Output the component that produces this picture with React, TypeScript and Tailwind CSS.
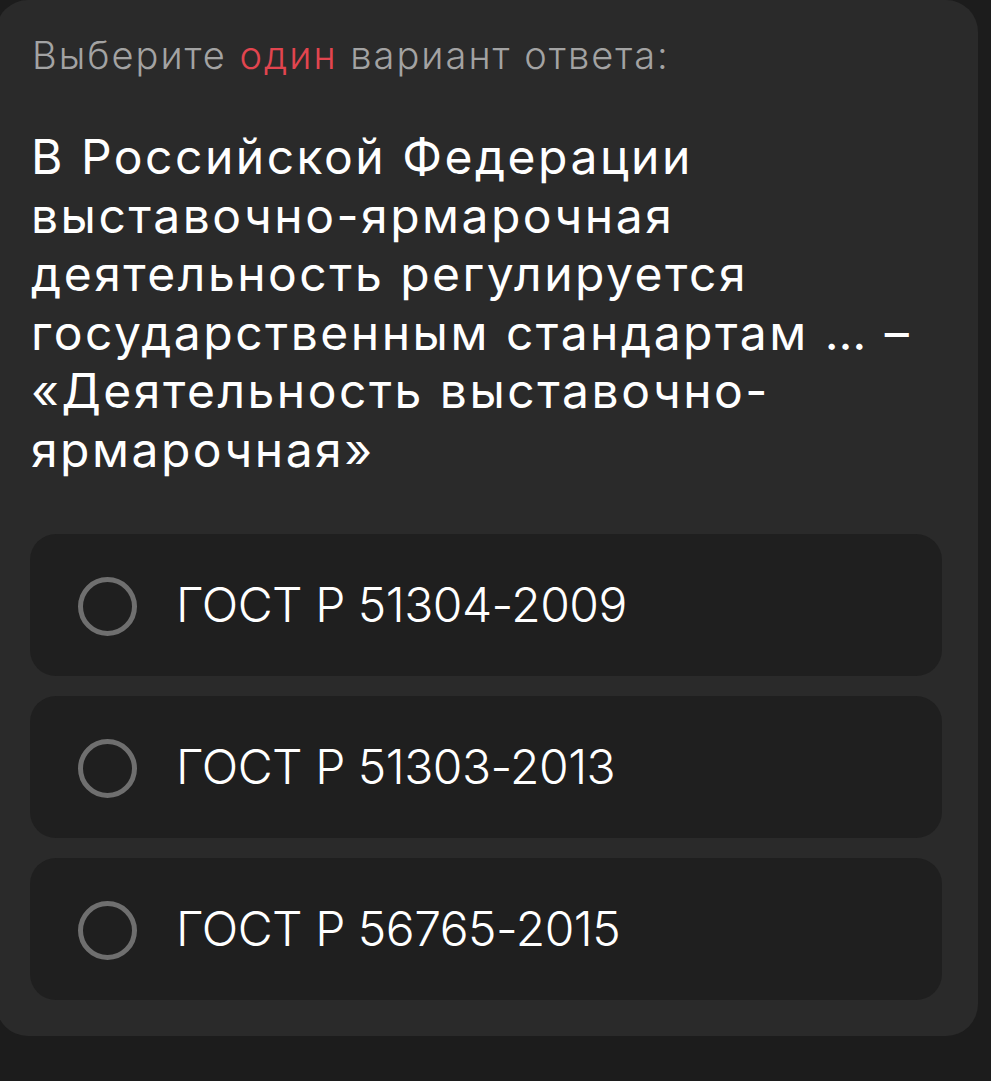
export default function App() {
  const options = ["ГОСТ Р 51304-2009", "ГОСТ Р 51303-2013", "ГОСТ Р 56765-2015"];
  const lines = [
    "В Российской Федерации",
    "выставочно-ярмарочная",
    "деятельность регулируется",
    "государственным стандартам … –",
    "«Деятельность выставочно-",
    "ярмарочная»",
  ];
  return (
    <div className="min-h-[1081px] w-[991px] bg-[#1c1c1c] overflow-hidden" style={{ fontFamily: "Inter, 'Noto Sans', sans-serif" }}>
      <div className="-ml-[4px] w-[982px] rounded-[32px] bg-[#2a2a2a] pl-[34px] pr-[36px] pt-[27px] pb-[36px]">
        <div className="pl-[2px] text-[38px] font-light text-[#a3a3a3] leading-[56px] tracking-[2px]">
          Выберите <span className="text-[#e2454f]">один</span> вариант ответа:
        </div>
        <div className="mt-[45px] pl-[1px] text-[48px] leading-[58.5px] text-white tracking-[2.5px]">
          {lines.map((l) => (
            <div key={l}>{l}</div>
          ))}
        </div>
        <div className="mt-[55px] flex flex-col gap-[20px]">
          {options.map((o) => (
            <div key={o} className="flex h-[142px] items-center rounded-[26px] bg-[#1f1f1f] pl-[48px]">
              <div className="mt-[2px] h-[59px] w-[59px] rounded-full border-[5px] border-[#6f6f6f]" />
              <div className="ml-[39px] text-[48px] font-light text-white tracking-[-0.5px]">{o}</div>
            </div>
          ))}
        </div>
      </div>
    </div>
  );
}
